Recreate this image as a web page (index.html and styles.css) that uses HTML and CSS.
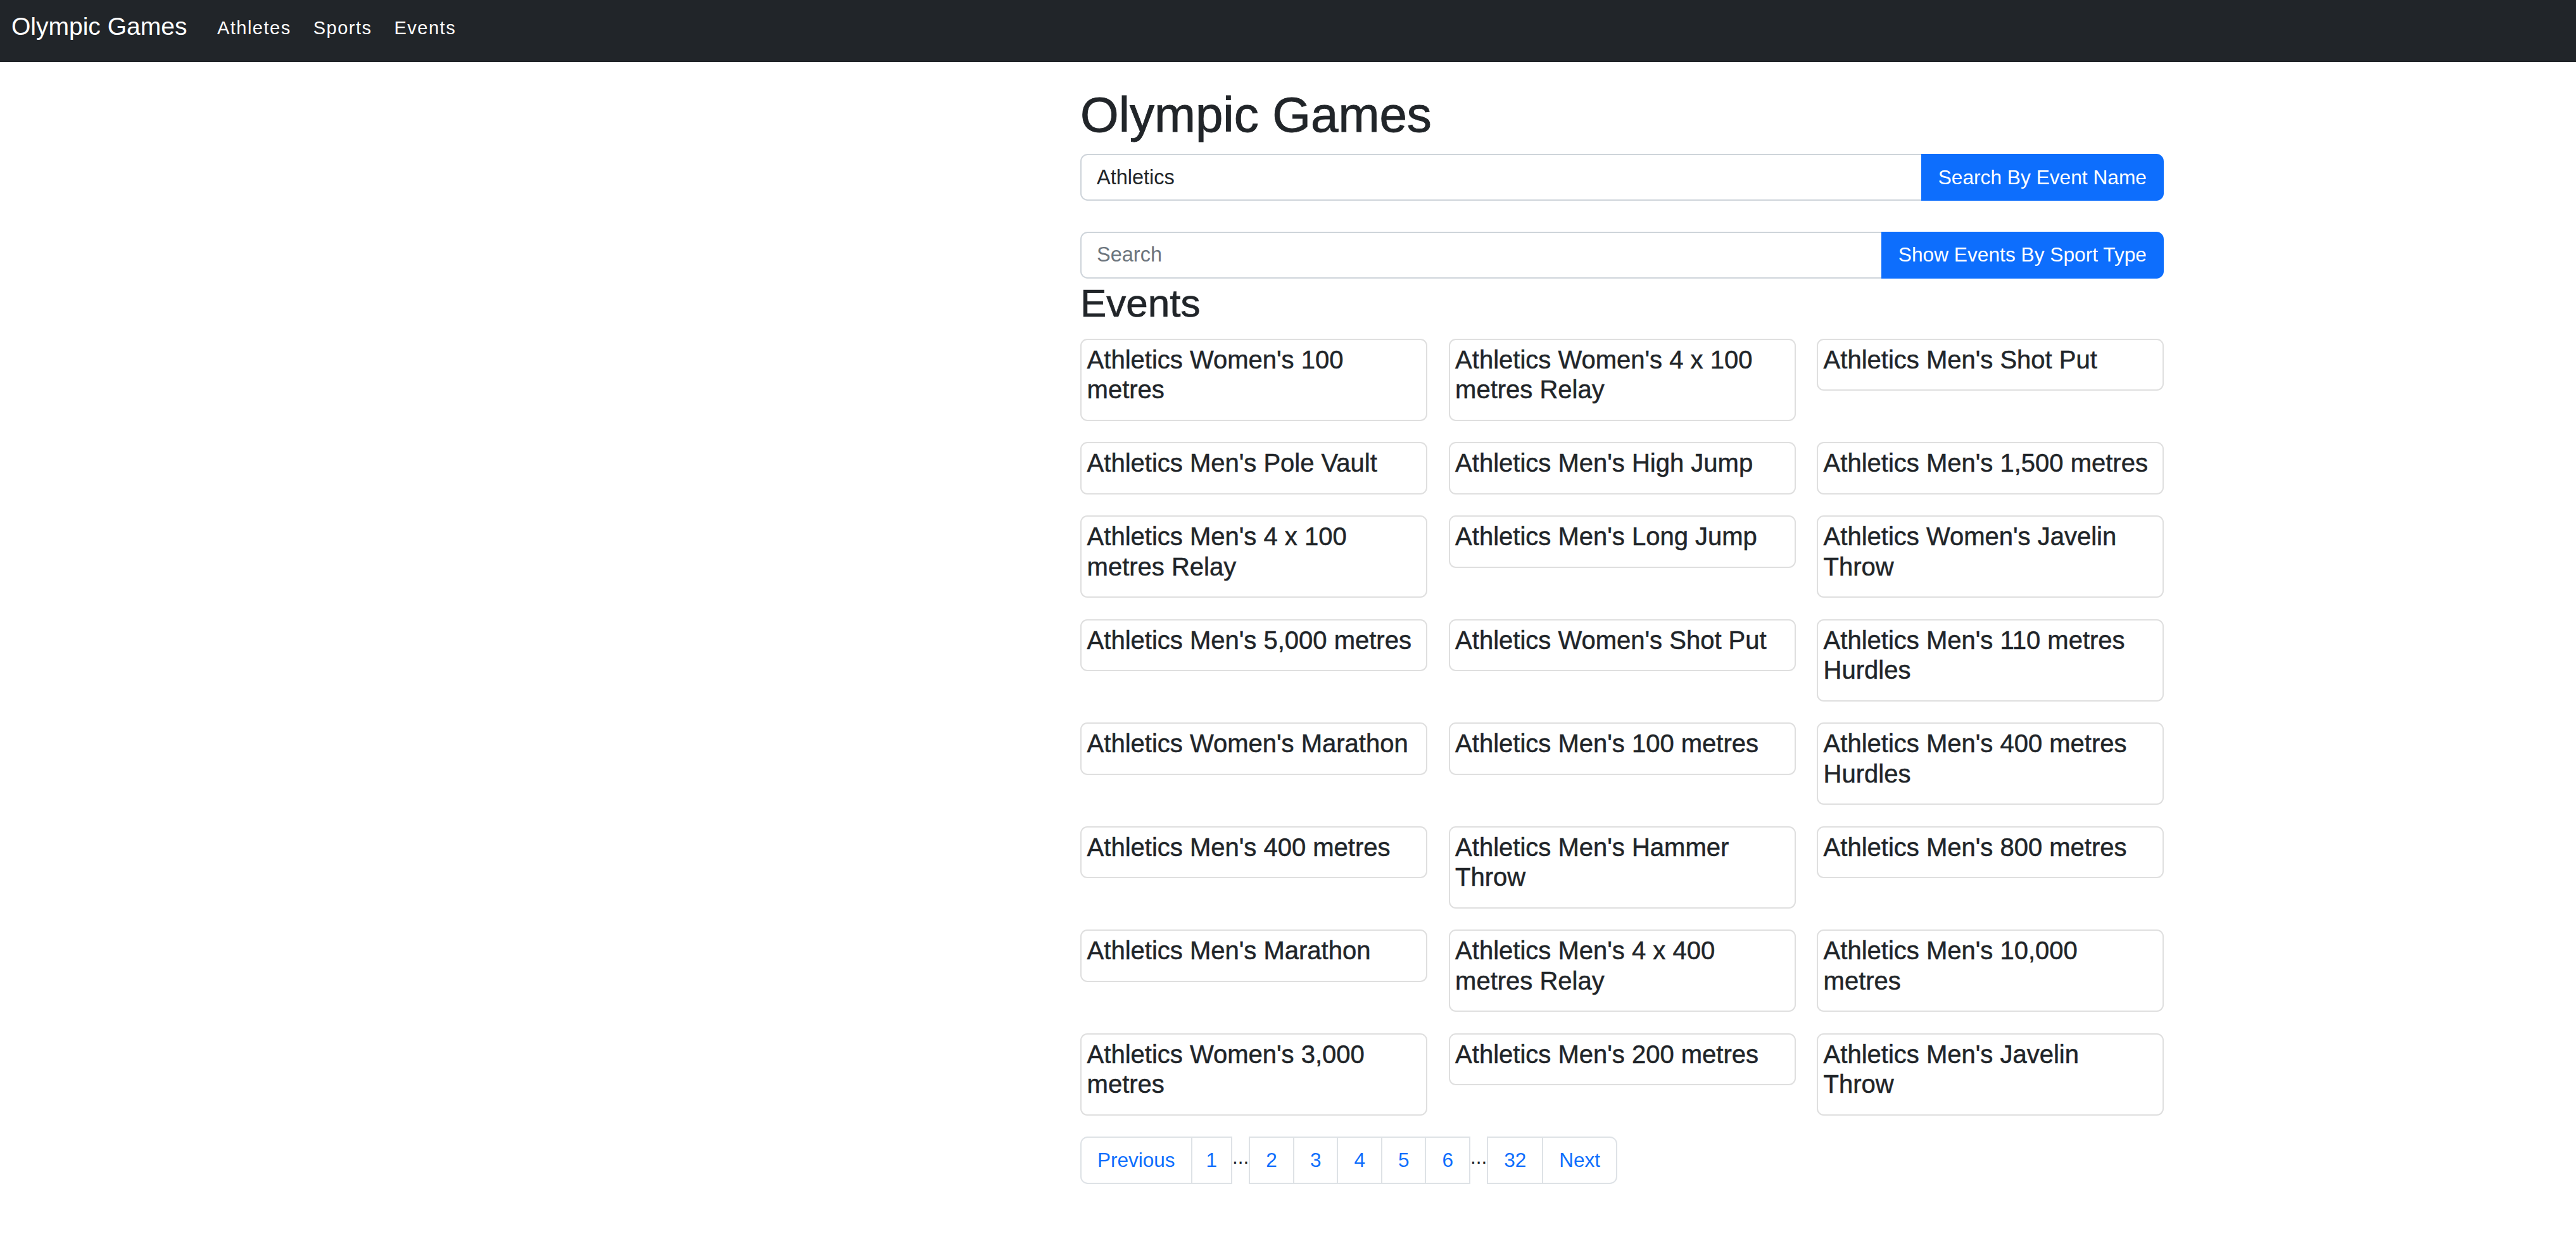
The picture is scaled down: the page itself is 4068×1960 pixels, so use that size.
FILE: index.html
```html
<!DOCTYPE html>
<html lang="en">
<head>
<meta charset="utf-8">
<title>Olympic Games</title>
<link rel="stylesheet" href="styles.css">
</head>
<body>
<nav class="navbar">
  <a class="brand" href="#">Olympic Games</a>
  <ul class="nav">
    <li><a class="nav-link" href="#">Athletes</a></li>
    <li><a class="nav-link" href="#">Sports</a></li>
    <li><a class="nav-link" href="#">Events</a></li>
  </ul>
</nav>
<main class="main">
  <h1 class="title">Olympic Games</h1>
  <form class="input-group">
    <input class="search-input" type="text" value="Athletics">
    <button class="search-btn" type="button">Search By Event Name</button>
  </form>
  <form class="input-group input-group-second">
    <input class="search-input" type="text" placeholder="Search">
    <button class="search-btn" type="button">Show Events By Sport Type</button>
  </form>
  <h2 class="section-title">Events</h2>
  <div class="event-grid">
    <div class="card"><h5 class="card-title">Athletics Women's 100 metres</h5></div>
    <div class="card"><h5 class="card-title">Athletics Women's 4 x 100 metres Relay</h5></div>
    <div class="card"><h5 class="card-title">Athletics Men's Shot Put</h5></div>
    <div class="card"><h5 class="card-title">Athletics Men's Pole Vault</h5></div>
    <div class="card"><h5 class="card-title">Athletics Men's High Jump</h5></div>
    <div class="card"><h5 class="card-title">Athletics Men's 1,500 metres</h5></div>
    <div class="card"><h5 class="card-title">Athletics Men's 4 x 100 metres Relay</h5></div>
    <div class="card"><h5 class="card-title">Athletics Men's Long Jump</h5></div>
    <div class="card"><h5 class="card-title">Athletics Women's Javelin Throw</h5></div>
    <div class="card"><h5 class="card-title">Athletics Men's 5,000 metres</h5></div>
    <div class="card"><h5 class="card-title">Athletics Women's Shot Put</h5></div>
    <div class="card"><h5 class="card-title">Athletics Men's 110 metres Hurdles</h5></div>
    <div class="card"><h5 class="card-title">Athletics Women's Marathon</h5></div>
    <div class="card"><h5 class="card-title">Athletics Men's 100 metres</h5></div>
    <div class="card"><h5 class="card-title">Athletics Men's 400 metres Hurdles</h5></div>
    <div class="card"><h5 class="card-title">Athletics Men's 400 metres</h5></div>
    <div class="card"><h5 class="card-title">Athletics Men's Hammer Throw</h5></div>
    <div class="card"><h5 class="card-title">Athletics Men's 800 metres</h5></div>
    <div class="card"><h5 class="card-title">Athletics Men's Marathon</h5></div>
    <div class="card"><h5 class="card-title">Athletics Men's 4 x 400 metres Relay</h5></div>
    <div class="card"><h5 class="card-title">Athletics Men's 10,000 metres</h5></div>
    <div class="card"><h5 class="card-title">Athletics Women's 3,000 metres</h5></div>
    <div class="card"><h5 class="card-title">Athletics Men's 200 metres</h5></div>
    <div class="card"><h5 class="card-title">Athletics Men's Javelin Throw</h5></div>
  </div>
  <nav class="pagination">
    <div class="page-group">
      <a class="page-link page-first" href="#">Previous</a>
      <a class="page-link page-narrow" href="#">1</a>
    </div>
    <span class="ellipsis">...</span>
    <div class="page-group">
      <a class="page-link" href="#">2</a>
      <a class="page-link" href="#">3</a>
      <a class="page-link" href="#">4</a>
      <a class="page-link" href="#">5</a>
      <a class="page-link" href="#">6</a>
    </div>
    <span class="ellipsis">...</span>
    <div class="page-group">
      <a class="page-link" href="#">32</a>
      <a class="page-link page-last" href="#">Next</a>
    </div>
  </nav>
</main>
</body>
</html>
```
FILE: styles.css
```css
* {
  box-sizing: border-box;
}

body {
  margin: 0;
  font-family: "Liberation Sans", Arial, sans-serif;
  color: #212529;
  background: #fff;
}

/* Navbar */
.navbar {
  height: 98px;
  background: #212529;
  display: flex;
  align-items: flex-start;
  padding: 12.5px 18px 0;
}

.brand {
  font-size: 39px;
  line-height: 58px;
  color: #fff;
  text-decoration: none;
  margin-right: 30px;
}

.nav {
  display: flex;
  list-style: none;
  margin: 9px 0 0;
  padding: 0;
}

.nav-link {
  display: block;
  font-size: 29px;
  line-height: 44px;
  letter-spacing: 1.5px;
  padding: 0 17.5px;
  color: #fff;
  text-decoration: none;
}

/* Main column */
.main {
  margin-left: 1706px;
  width: 1711px;
  padding-top: 36.5px;
}

.title {
  font-size: 78px;
  line-height: 93.6px;
  font-weight: 500;
  -webkit-text-stroke: 0.9px #212529;
  margin: 0 0 15px;
}

.input-group {
  display: flex;
  height: 74px;
  margin: 0;
}

.input-group-second {
  margin-top: 48.7px;
}

.search-input {
  flex: 1;
  min-width: 0;
  border: 2px solid #ced4da;
  border-right: 0;
  border-radius: 11.7px 0 0 11.7px;
  padding: 0 24px;
  font-family: "Liberation Sans", Arial, sans-serif;
  font-size: 32.5px;
  color: #212529;
  background: #fff;
  outline: none;
}

.search-input::placeholder {
  color: #6c757d;
}

.search-btn {
  border: 2px solid #0d6efd;
  background: #0d6efd;
  color: #fff;
  font-family: "Liberation Sans", Arial, sans-serif;
  font-size: 31.7px;
  line-height: 49px;
  padding: 0 25px;
  border-radius: 0 11.7px 11.7px 0;
  cursor: pointer;
}

.section-title {
  font-size: 62px;
  line-height: 74.4px;
  font-weight: 500;
  -webkit-text-stroke: 0.7px #212529;
  margin: 2px 0 18.6px;
}

/* Event cards */
.event-grid {
  display: grid;
  grid-template-columns: repeat(3, 1fr);
  column-gap: 33.5px;
  row-gap: 33.5px;
  align-items: start;
}

.card {
  border: 2px solid #dfdfdf;
  border-radius: 11px;
  padding: 8px 18px 23px 8.6px;
}

.card-title {
  margin: 0;
  font-size: 40px;
  line-height: 47.5px;
  font-weight: 500;
  -webkit-text-stroke: 0.5px #212529;
}

/* Pagination */
.pagination {
  display: flex;
  align-items: flex-start;
  margin-top: 33px;
}

.page-group {
  display: flex;
}

.page-link {
  display: block;
  border: 2px solid #dee2e6;
  padding: 11px 25px;
  font-size: 31.5px;
  line-height: 49px;
  color: #0d6efd;
  text-decoration: none;
  background: #fff;
}

.page-link + .page-link {
  margin-left: -2px;
}

.page-narrow {
  padding-left: 22px;
  padding-right: 22px;
}

.page-first {
  border-radius: 11.7px 0 0 11.7px;
}

.page-last {
  border-radius: 0 11.7px 11.7px 0;
}

.ellipsis {
  font-size: 31.5px;
  line-height: 49px;
  padding-top: 8px;
  color: #212529;
}
```
